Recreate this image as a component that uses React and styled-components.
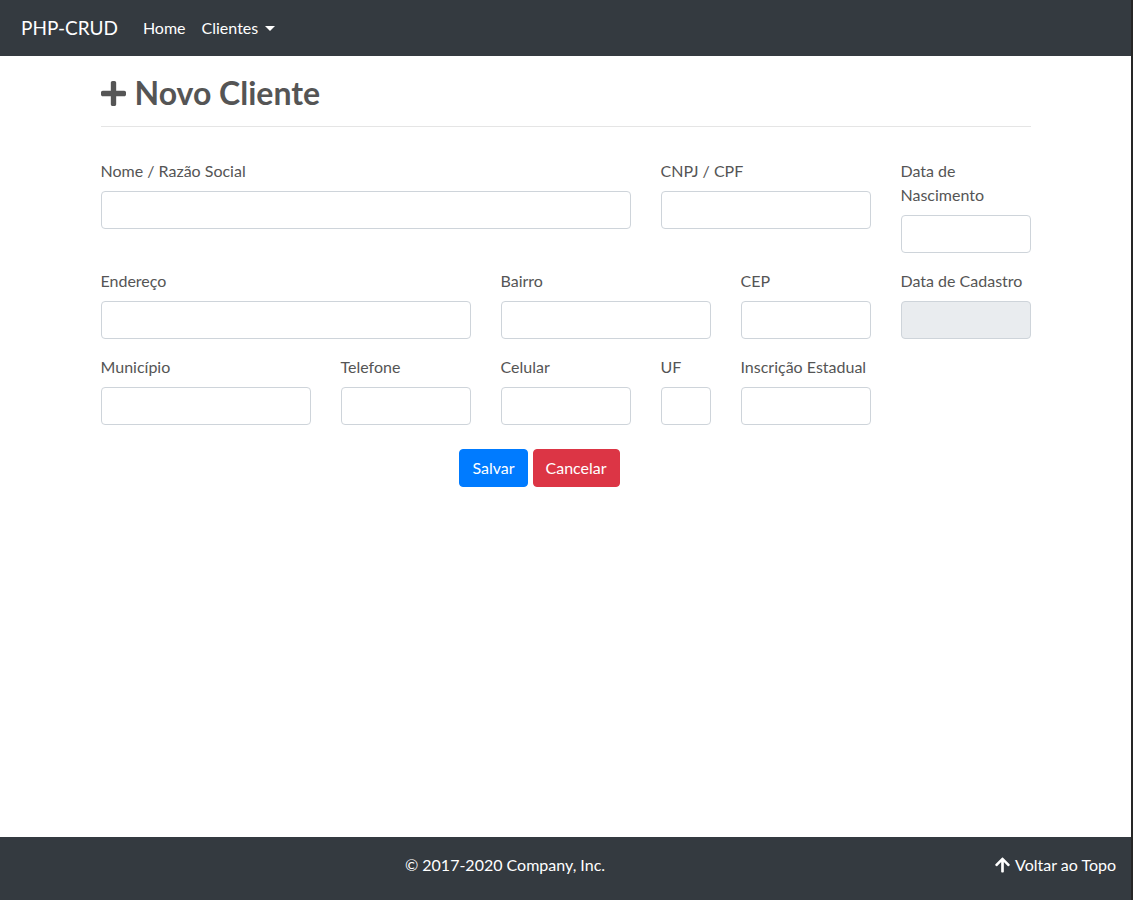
import React from "react";
import styled, { createGlobalStyle } from "styled-components";

const GlobalStyle = createGlobalStyle`
  *, *::before, *::after { box-sizing: border-box; }
  html, body { margin: 0; padding: 0; }
  body {
    font-family: Lato, "Open Sans", sans-serif;
    font-size: 16px;
    line-height: 1.5;
    color: #555;
    background: #fff;
  }
`;

const Page = styled.div`
  min-height: 100vh;
  display: flex;
  flex-direction: column;
  border-right: 2px solid #262626;
`;

const Navbar = styled.nav`
  height: 56px;
  background: #343a40;
  display: flex;
  align-items: center;
  padding: 0 16px 0 21px;
`;

const Brand = styled.a`
  color: #fff;
  font-size: 19px;
  line-height: 30px;
  margin-right: 17px;
  text-decoration: none;
`;

const NavLink = styled.a`
  color: #fff;
  padding: 0 8px;
  text-decoration: none;
  display: inline-flex;
  align-items: center;
  ${(p) =>
    p.$dropdown &&
    `
    &::after {
      content: "";
      display: inline-block;
      margin-left: 7px;
      border-top: 5px solid #fff;
      border-left: 5px solid transparent;
      border-right: 5px solid transparent;
      margin-top: 1px;
    }
  `}
`;

const Main = styled.main`
  flex: 1;
`;

const Container = styled.div`
  width: 960px;
  margin: 0 auto;
  padding: 18px 15px 0;
`;

const Title = styled.h2`
  margin: 0;
  font-size: 32px;
  line-height: 38px;
  font-weight: 700;
  color: #555;
  display: flex;
  align-items: center;
  gap: 9px;
`;

const Divider = styled.hr`
  margin: 14px 0 32px;
  border: 0;
  border-top: 1px solid #e5e5e5;
`;

const Row = styled.div`
  display: grid;
  grid-template-columns: repeat(12, 1fr);
  column-gap: 30px;
  align-items: start;
`;

const FormGroup = styled.div`
  grid-column: span ${(p) => p.$span};
  margin-bottom: 16px;
`;

const Label = styled.label`
  display: block;
  margin-bottom: 8px;
  font-size: 16px;
  line-height: 24px;
  color: #555;
`;

const Input = styled.input`
  display: block;
  width: 100%;
  height: 38px;
  padding: 6px 12px;
  font: inherit;
  color: #495057;
  background: ${(p) => (p.disabled ? "#e9ecef" : "#fff")};
  border: 1px solid #ced4da;
  border-radius: 4px;
  outline: none;
`;

const Actions = styled.div`
  display: flex;
  justify-content: center;
  gap: 5px;
  padding-right: 52px;
  margin-top: 8px;
`;

const Button = styled.button`
  height: 38px;
  padding: 0 12px;
  font: inherit;
  font-size: 16px;
  color: #fff;
  border: 1px solid ${(p) => (p.$variant === "danger" ? "#dc3545" : "#007bff")};
  background: ${(p) => (p.$variant === "danger" ? "#dc3545" : "#007bff")};
  border-radius: 4px;
  cursor: pointer;
`;

const Footer = styled.footer`
  height: 63px;
  background: #343a40;
  color: #fff;
  display: flex;
  align-items: flex-start;
  padding: 16px 15px 0 15px;
`;

const Copy = styled.p`
  flex: 1;
  margin: 0;
  text-align: center;
  line-height: 24px;
`;

const TopLink = styled.a`
  color: #fff;
  text-decoration: none;
  line-height: 24px;
  display: inline-flex;
  align-items: center;
  gap: 5px;
`;

const PlusIcon = () => (
  <svg width="25" height="25" viewBox="0 32 448 448" fill="#555" aria-hidden="true">
    <path d="M416 208H272V64c0-17.67-14.33-32-32-32h-32c-17.67 0-32 14.33-32 32v144H32c-17.67 0-32 14.33-32 32v32c0 17.67 14.33 32 32 32h144v144c0 17.67 14.33 32 32 32h32c17.67 0 32-14.33 32-32V304h144c17.67 0 32-14.33 32-32v-32c0-17.67-14.33-32-32-32z" />
  </svg>
);

const ArrowUpIcon = () => (
  <svg width="15" height="16" viewBox="0 24 448 464" fill="#fff" aria-hidden="true">
    <path d="M34.9 289.5l-22.2-22.2c-9.4-9.4-9.4-24.6 0-33.9L207 39c9.4-9.4 24.6-9.4 33.9 0l194.3 194.3c9.4 9.4 9.4 24.6 0 33.9L413 289.4c-9.5 9.5-25 9.3-34.3-.4L264 168.6V456c0 13.3-10.7 24-24 24h-32c-13.3 0-24-10.7-24-24V168.6L69.2 289.1c-9.3 9.8-24.8 10-34.3.4z" />
  </svg>
);

const Field = ({ span, label, disabled }) => (
  <FormGroup $span={span}>
    <Label>{label}</Label>
    <Input type="text" disabled={disabled} />
  </FormGroup>
);

export default function App() {
  return (
    <Page>
      <GlobalStyle />
      <Navbar>
        <Brand href="#">PHP-CRUD</Brand>
        <NavLink href="#">Home</NavLink>
        <NavLink href="#" $dropdown>
          Clientes
        </NavLink>
      </Navbar>
      <Main>
        <Container>
          <Title>
            <PlusIcon />
            Novo Cliente
          </Title>
          <Divider />
          <form>
            <Row>
              <Field span={7} label="Nome / Razão Social" />
              <Field span={3} label="CNPJ / CPF" />
              <Field span={2} label="Data de Nascimento" />
            </Row>
            <Row>
              <Field span={5} label="Endereço" />
              <Field span={3} label="Bairro" />
              <Field span={2} label="CEP" />
              <Field span={2} label="Data de Cadastro" disabled />
            </Row>
            <Row>
              <Field span={3} label="Município" />
              <Field span={2} label="Telefone" />
              <Field span={2} label="Celular" />
              <Field span={1} label="UF" />
              <Field span={2} label="Inscrição Estadual" />
            </Row>
            <Actions>
              <Button type="button" $variant="primary">Salvar</Button>
              <Button type="button" $variant="danger">Cancelar</Button>
            </Actions>
          </form>
        </Container>
      </Main>
      <Footer>
        <Copy>© 2017-2020 Company, Inc.</Copy>
        <TopLink href="#">
          <ArrowUpIcon />
          Voltar ao Topo
        </TopLink>
      </Footer>
    </Page>
  );
}
